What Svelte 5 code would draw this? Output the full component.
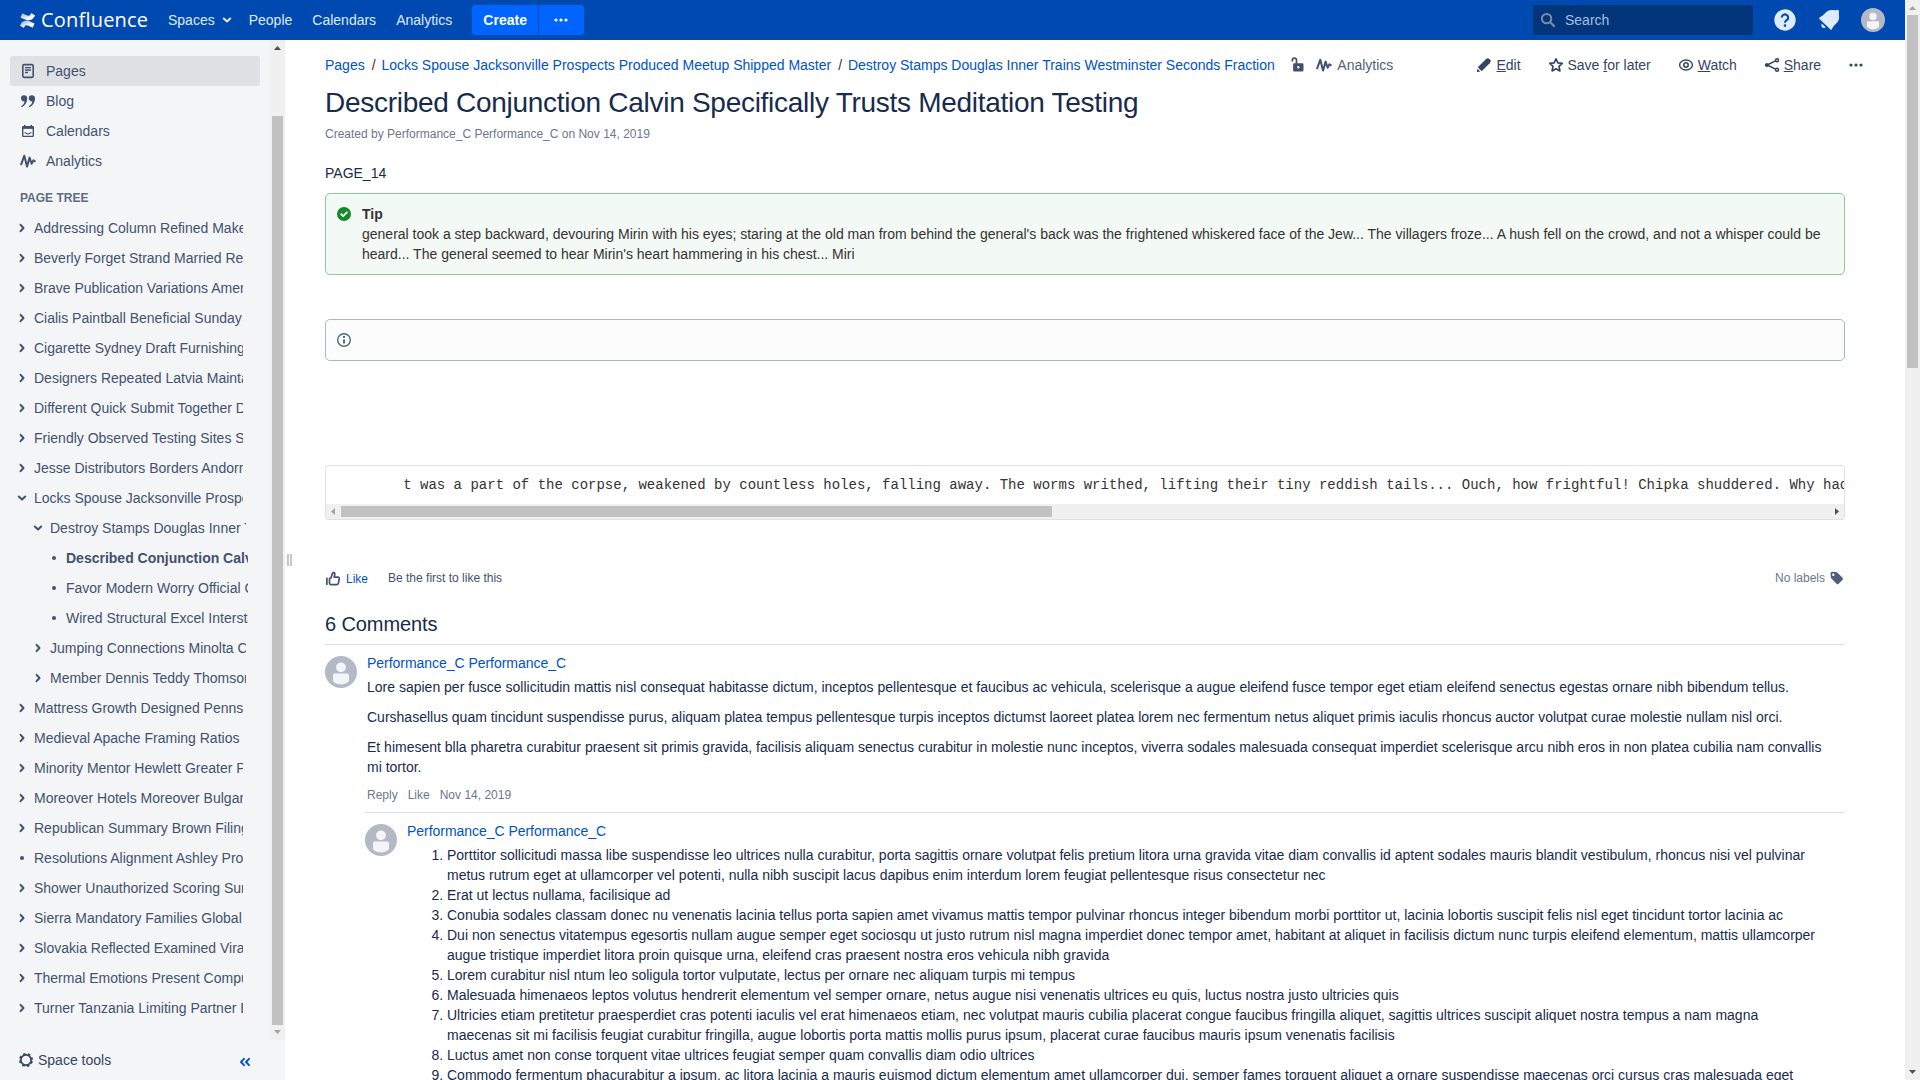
<script>
  const navLinks = ['People', 'Calendars', 'Analytics'];
  const spaceLinks = [
    { icon: 'page', label: 'Pages', active: true },
    { icon: 'blog', label: 'Blog' },
    { icon: 'calendar', label: 'Calendars' },
    { icon: 'pulse', label: 'Analytics' },
  ];
  // level: depth in the tree; kind: closed, open or leaf
  const tree = [
    { t: 'Addressing Column Refined Makers' },
    { t: 'Beverly Forget Strand Married Reported' },
    { t: 'Brave Publication Variations American' },
    { t: 'Cialis Paintball Beneficial Sunday' },
    { t: 'Cigarette Sydney Draft Furnishings' },
    { t: 'Designers Repeated Latvia Maintained' },
    { t: 'Different Quick Submit Together Done' },
    { t: 'Friendly Observed Testing Sites Same' },
    { t: 'Jesse Distributors Borders Andorra' },
    { t: 'Locks Spouse Jacksonville Prospects', kind: 'open' },
    { t: 'Destroy Stamps Douglas Inner Trains', kind: 'open', level: 1 },
    { t: 'Described Conjunction Calvin Specifically', kind: 'leaf', level: 2, current: true },
    { t: 'Favor Modern Worry Official Card', kind: 'leaf', level: 2 },
    { t: 'Wired Structural Excel Interstate', kind: 'leaf', level: 2 },
    { t: 'Jumping Connections Minolta Cap', level: 1 },
    { t: 'Member Dennis Teddy Thomson', level: 1 },
    { t: 'Mattress Growth Designed Pennsylvania' },
    { t: 'Medieval Apache Framing Ratios' },
    { t: 'Minority Mentor Hewlett Greater Park' },
    { t: 'Moreover Hotels Moreover Bulgaria' },
    { t: 'Republican Summary Brown Filing' },
    { t: 'Resolutions Alignment Ashley Producer', kind: 'leaf' },
    { t: 'Shower Unauthorized Scoring Summer' },
    { t: 'Sierra Mandatory Families Global' },
    { t: 'Slovakia Reflected Examined Viral' },
    { t: 'Thermal Emotions Present Computer' },
    { t: 'Turner Tanzania Limiting Partner Each' },
  ];
  const actions = [
    { icon: 'edit', pre: '', key: 'E', post: 'dit' },
    { icon: 'star', pre: 'Save ', key: 'f', post: 'or later' },
    { icon: 'eye', pre: '', key: 'W', post: 'atch' },
    { icon: 'share', pre: '', key: 'S', post: 'hare' },
  ];
  const paragraphs = [
    'Lore sapien per fusce sollicitudin mattis nisl consequat habitasse dictum, inceptos pellentesque et faucibus ac vehicula, scelerisque a augue eleifend fusce tempor eget etiam eleifend senectus egestas ornare nibh bibendum tellus.',
    'Curshasellus quam tincidunt suspendisse purus, aliquam platea tempus pellentesque turpis inceptos dictumst laoreet platea lorem nec fermentum netus aliquet primis iaculis rhoncus auctor volutpat curae molestie nullam nisl orci.',
    'Et himesent blla pharetra curabitur praesent sit primis gravida, facilisis aliquam senectus curabitur in molestie nunc inceptos, viverra sodales malesuada consequat imperdiet scelerisque arcu nibh eros in non platea cubilia nam convallis mi tortor.',
  ];
  const items = [
    'Porttitor sollicitudi massa libe suspendisse leo ultrices nulla curabitur, porta sagittis ornare volutpat felis pretium litora urna gravida vitae diam convallis id aptent sodales mauris blandit vestibulum, rhoncus nisi vel pulvinar metus rutrum eget at ullamcorper vel potenti, nulla nibh suscipit lacus dapibus enim interdum lorem feugiat pellentesque risus consectetur nec',
    'Erat ut lectus nullama, facilisique ad',
    'Conubia sodales classam donec nu venenatis lacinia tellus porta sapien amet vivamus mattis tempor pulvinar rhoncus integer bibendum morbi porttitor ut, lacinia lobortis suscipit felis nisl eget tincidunt tortor lacinia ac',
    'Dui non senectus vitatempus egesortis nullam augue semper eget sociosqu ut justo rutrum nisl magna imperdiet donec tempor amet, habitant at aliquet in facilisis dictum nunc turpis eleifend elementum, mattis ullamcorper augue tristique imperdiet litora proin quisque urna, eleifend cras praesent nostra eros vehicula nibh gravida',
    'Lorem curabitur nisl ntum leo soligula tortor vulputate, lectus per ornare nec aliquam turpis mi tempus',
    'Malesuada himenaeos leptos volutus hendrerit elementum vel semper ornare, netus augue nisi venenatis ultrices eu quis, luctus nostra justo ultricies quis',
    'Ultricies etiam pretitetur praesperdiet cras potenti iaculis vel erat himenaeos etiam, nec volutpat mauris cubilia placerat congue faucibus fringilla aliquet, sagittis ultrices suscipit aliquet nostra tempus a nam magna maecenas sit mi facilisis feugiat curabitur fringilla, augue lobortis porta mattis mollis purus ipsum, placerat curae faucibus mauris ipsum venenatis facilisis',
    'Luctus amet non conse torquent vitae ultrices feugiat semper quam convallis diam odio ultrices',
    'Commodo fermentum phacurabitur a ipsum, ac litora lacinia a mauris euismod dictum elementum amet ullamcorper dui, semper fames torquent aliquet a ornare suspendisse maecenas orci cursus cras malesuada eget',
  ];
</script>

{#snippet icon(name)}
  <svg class="ic" viewBox="0 0 16 16" width="16" height="16" fill="none" stroke="currentColor" stroke-width="1.6" stroke-linecap="round" stroke-linejoin="round" aria-hidden="true">
    {#if name === 'page'}
      <rect x="2.8" y="1.6" width="10.4" height="12.8" rx="1.3" />
      <path d="M5 4.6h6M5 7h6M5 9.500h3" stroke-width="1.4" stroke-linecap="butt" />
    {:else if name === 'blog'}
      <g fill="currentColor" stroke="none">
        <path d="M4 2.2a3 3 0 0 1 3.2 3.3c0 4-2.2 7.300-5.400 8.400-.700.200-1-.600-.400-1 1.900-1.200 2.900-2.700 3.100-4.500C2.600 8.600 1 7.300 1 5.300A3 3 0 0 1 4 2.200z" />
        <path d="M11.800 2.200A3 3 0 0 1 15 5.500c0 4-2.200 7.300-5.400 8.400-.700.200-1-.600-.400-1 1.900-1.200 2.900-2.700 3.100-4.500-1.900.200-3.500-1.100-3.500-3.100a3 3 0 0 1 3-3.100z" />
      </g>
    {:else if name === 'calendar'}
      <rect x="2.700" y="3.700" width="10.600" height="9.700" rx=".6" stroke-width="1.400" />
      <path d="M2.500 4.700h11" stroke-width="2.400" stroke-linecap="butt" />
      <path d="M4.800 2.600v1M11.200 2.600v1" stroke-width="1.600" />
      <path d="M5 9.600q3 2.400 6 0" stroke-width="1.200" />
    {:else if name === 'pulse'}
      <path d="M1.200 11.300 4.300 2.700 7 13.600 9.600 4.600 11.600 10.800 13.500 7.300l1.300.900" stroke-width="2" />
    {:else if name === 'edit'}
      <g fill="currentColor" stroke="none">
        <path d="M2.300 9.800 9.800 2.300l3.900 3.900-7.500 7.500-.800.300L2 10.600z" />
        <path d="M10.200 1.900q1.700-1.500 3.200 0l.700.700q1.500 1.500 0 3.200l-.800.900-4-4z" />
        <path d="M1.500 11.700l2.800 2.800-2.800.500q-.800 0-.600-.700z" />
      </g>
    {:else if name === 'star'}
      <path d="M8 1.900l1.900 4 4.300.500-3.200 3 .9 4.500L8 11.700l-3.900 2.200.9-4.500-3.200-3 4.300-.5z" stroke-width="1.700" />
    {:else if name === 'eye'}
      <ellipse cx="8" cy="8" rx="6.400" ry="5" stroke-width="1.400" />
      <circle cx="8" cy="8" r="2.200" stroke-width="1.500" />
    {:else if name === 'share'}
      <path d="M12.700 3.400 3 8l9.700 4.600" stroke-width="1.500" />
      <circle cx="13" cy="3.300" r="1.500" fill="#fff" stroke-width="1.500" />
      <circle cx="2.800" cy="8" r="1.500" fill="currentColor" stroke-width="1" />
      <circle cx="13" cy="12.700" r="1.500" fill="#fff" stroke-width="1.500" />
    {:else if name === 'dots'}
      <g fill="currentColor" stroke="none"><circle cx="3" cy="8" r="1.600" /><circle cx="8" cy="8" r="1.600" /><circle cx="13" cy="8" r="1.600" /></g>
    {:else if name === 'lock'}
      <path d="M2.300 3.800V3.300a2.100 2.100 0 0 1 4.200 0V7" stroke-width="1.700" />
      <path fill-rule="evenodd" fill="currentColor" stroke="none" d="M4.400 6.200h7.800a1.300 1.300 0 0 1 1.300 1.300v5.700a1.300 1.300 0 0 1-1.300 1.300H4.400a1.300 1.300 0 0 1-1.300-1.300V7.500a1.300 1.300 0 0 1 1.300-1.300zm3.900 2.900a1.200 1.200 0 1 0 0 2.400 1.200 1.200 0 0 0 0-2.400z" />
    {:else if name === 'like'}
      <path d="M1.900 7.300v6M4.500 7.800q0-.8.800-.8h.7L7.300 2.700q.3-1.200 1.500-1.100 1.300.3.900 2.100l-.5 2.400h3.600q1.600 0 1.400 1.500l-.7 4.300q-.3 1.700-1.800 1.700H6q-1.500 0-1.500-1.300z" stroke-width="1.700" />
    {:else if name === 'tag'}
      <path fill-rule="evenodd" fill="currentColor" stroke="none" d="M1.500 3.500q0-1.700 1.700-1.700l3.600.2q.8 0 1.400.6l5.400 5.200q1 1 0 2l-4 4q-1 1-2 0L2.400 8.600q-.6-.6-.6-1.400zM4.300 3.500a1.200 1.200 0 1 0 0 2.400 1.200 1.200 0 0 0 0-2.400z" />
    {:else if name === 'tip'}
      <circle cx="8" cy="8" r="7" fill="currentColor" stroke="none" />
      <path d="M5.200 8.200l2 2 3.700-3.900" stroke="#fff" stroke-width="1.800" />
    {:else if name === 'info'}
      <circle cx="8" cy="8" r="6.300" stroke-width="1.400" />
      <path d="M8 7.500v4M8 4.100v1.800" stroke-width="1.900" stroke-linecap="butt" />
    {:else if name === 'gear'}
      <circle cx="8" cy="8" r="5.100" stroke-width="1.700" />
      <circle cx="8" cy="8" r="6.200" stroke-width="1.600" stroke-linecap="butt" stroke-dasharray="2.600 2.270" stroke-dashoffset="-1.100" />
    {:else if name === 'search'}
      <circle cx="6.600" cy="6.600" r="4.700" stroke-width="2" />
      <path d="M10.300 10.300l3.700 3.700" stroke-width="2.300" />
    {:else if name === 'down'}
      <path d="M4.800 6.500 8 9.500l3.200-3" stroke-width="2" />
    {:else if name === 'right'}
      <path d="M6.600 4.800 9.500 8l-2.900 3.200" stroke-width="2" />
    {:else if name === 'leaf'}
      <circle cx="8" cy="8" r="2" fill="currentColor" stroke="none" />
    {:else if name === 'collapse'}
      <path d="M7 4.800 4 8l3 3.200M12 4.800 9 8l3 3.200" stroke-width="1.900" />
    {/if}
  </svg>
{/snippet}

{#snippet avatar(size)}
  <svg class="avatar" viewBox="0 0 32 32" width={size} height={size} aria-hidden="true">
    <circle cx="16" cy="16" r="16" fill="#b3bac5" />
    <circle cx="16" cy="11.300" r="4.900" fill="#f4f5f7" />
    <path d="M9.500 17.500h13a1.500 1.500 0 0 1 1.500 1.500v6.200q-3.500 3.300-8 3.300t-8-3.300V19a1.500 1.500 0 0 1 1.500-1.500z" fill="#f4f5f7" />
  </svg>
{/snippet}

{#snippet arrow(dir, strong)}
  <svg class="arrow {dir}" class:strong viewBox="0 0 15 15" width="15" height="15" aria-hidden="true"><path d="M7.500 6 11 10H4z" /></svg>
{/snippet}

<div class="window">
  <div class="app">
    <header>
      <a class="logo" href="#home">
        <svg viewBox="0 0 24 24" width="15" height="15" aria-hidden="true">
          <defs>
            <linearGradient id="low" x1="1" y1="1" x2="0" y2="0"><stop offset="0.300" stop-color="#fff" /><stop offset="1" stop-color="#fff" stop-opacity=".55" /></linearGradient>
            <linearGradient id="high" x1="0" y1="0" x2="1" y2="1"><stop offset="0" stop-color="#fff" stop-opacity=".6" /><stop offset="0.700" stop-color="#fff" /></linearGradient>
          </defs>
          <path fill="url(#low)" d="M.87 18.257c-.248.382-.53.875-.763 1.245a.764.764 0 0 0 .255 1.040l4.965 3.054a.764.764 0 0 0 1.058-.26c.199-.332.454-.763.733-1.221 1.967-3.247 3.945-2.853 7.508-1.146l4.957 2.337a.764.764 0 0 0 1.028-.382l2.364-5.346a.764.764 0 0 0-.382-1 599.851 599.851 0 0 1-4.965-2.361C10.911 10.970 5.224 11.185.87 18.257z" />
          <path fill="url(#high)" d="M23.131 5.743c.249-.405.531-.875.764-1.250a.764.764 0 0 0-.256-1.034L18.675.404a.764.764 0 0 0-1.058.26c-.195.335-.451.763-.734 1.225-1.966 3.246-3.945 2.850-7.508 1.146L4.437.694a.764.764 0 0 0-1.027.382L1.046 6.422a.764.764 0 0 0 .382 1c1.039.49 3.105 1.467 4.965 2.361 6.698 3.246 12.392 3.029 16.738-4.040z" />
        </svg>
        <span>Confluence</span>
      </a>
      <nav class="primary">
        <a class="spaces" href="#spaces">Spaces{@render icon('down')}</a>
        {#each navLinks as l}<a href="#{l}">{l}</a>{/each}
      </nav>
      <div class="create"><button class="main-create">Create</button><button class="more">{@render icon('dots')}</button></div>
      <div class="search">{@render icon('search')}<span>Search</span></div>
      <div class="tools">
        <svg viewBox="0 0 22 22" width="22" height="22" aria-hidden="true">
          <circle cx="11" cy="11" r="10.700" fill="#deebff" />
          <path d="M7.800 8.500a3.200 3.100 0 1 1 4.800 2.700q-1.600.900-1.600 2.600" fill="none" stroke="#0049b0" stroke-width="2.100" />
          <circle cx="11" cy="16.600" r="1.300" fill="#0049b0" />
        </svg>
        <svg viewBox="0 0 22 22" width="22" height="22" fill="#deebff" aria-hidden="true">
          <path d="M1.300 8.700C3.300 7.500 5 6.500 6.300 5 8.200 2.900 10 1.300 13 1.100c2.300-.1 4 .3 6-.2.900-.2 1.300.1 1.500.5.500.4.800.9.500 1.700-.4 2 .1 3.500.1 5.500 0 3-1.500 5-3.600 6.700-1.700 1.400-2.700 3.100-3.800 5.200-.3.500-.8.500-1.200.1L1.200 9.800c-.4-.400-.4-.800.1-1.100z" />
          <path d="M3.700 14.400l4 3.900q-1.700 1.200-3.300.100-1.700-1.800-.7-4z" />
        </svg>
        {@render avatar(24)}
      </div>
    </header>

    <div class="body">
      <aside>
        <div class="side-scroll">
          <div class="side-content">
            <nav class="space-nav">
              {#each spaceLinks as s}<a class:active={s.active} href="#{s.label}">{@render icon(s.icon)}{s.label}</a>{/each}
            </nav>
            <h5>PAGE TREE</h5>
            <ul class="tree">
              {#each tree as n}
                <li class="level{n.level ?? 0}" class:current={n.current}>
                  {@render icon(n.kind === 'open' ? 'down' : n.kind === 'leaf' ? 'leaf' : 'right')}
                  <span>{n.t}</span>
                </li>
              {/each}
            </ul>
          </div>
          <div class="vbar side-bar">{@render arrow('up', true)}<div class="thumb"></div>{@render arrow('down', false)}</div>
        </div>
        <div class="side-foot">
          <span class="space-tools">{@render icon('gear')}Space tools</span>
          <span class="collapse">{@render icon('collapse')}</span>
        </div>
      </aside>
      <div class="splitter"><i></i><i></i></div>

      <main>
        <div class="topline">
          <div class="crumbs">
            <a href="#pages">Pages</a><i>/</i><a href="#locks">Locks Spouse Jacksonville Prospects Produced Meetup Shipped Master</a><i>/</i><a href="#destroy">Destroy Stamps Douglas Inner Trains Westminster Seconds Fraction</a>
            <span class="meta lock">{@render icon('lock')}</span>
            <span class="meta">{@render icon('pulse')}Analytics</span>
          </div>
          <div class="actions">
            {#each actions as a}
              <a href="#{a.icon}">{@render icon(a.icon)}<span>{a.pre}<u>{a.key}</u>{a.post}</span></a>
            {/each}
            <a href="#more">{@render icon('dots')}</a>
          </div>
        </div>
        <h1>Described Conjunction Calvin Specifically Trusts Meditation Testing</h1>
        <p class="byline">Created by Performance_C Performance_C on Nov 14, 2019</p>
        <p class="lead">PAGE_14</p>
        <section class="panel tip">
          {@render icon('tip')}
          <div><b>Tip</b><br />general took a step backward, devouring Mirin with his eyes; staring at the old man from behind the general's back was the frightened whiskered face of the Jew... The villagers froze... A hush fell on the crowd, and not a whisper could be heard... The general seemed to hear Mirin's heart hammering in his chest... Miri</div>
        </section>
        <section class="panel info">{@render icon('info')}</section>
        <section class="code">
          <pre>{'        t was a part of the corpse, weakened by countless holes, falling away. The worms writhed, lifting their tiny reddish tails... Ouch, how frightful! Chipka shuddered. Why had'}</pre>
          <div class="hbar">{@render arrow('left', false)}<div class="thumb"></div>{@render arrow('rightward', true)}</div>
        </section>
        <div class="likes">
          <a class="like" href="#like">{@render icon('like')}<span>Like</span></a>
          <span class="first">Be the first to like this</span>
          <span class="labels">No labels{@render icon('tag')}</span>
        </div>
        <h2>6 Comments</h2>
        <article class="comment">
          {@render avatar(32)}
          <div class="text">
            <a href="#user">Performance_C Performance_C</a>
            {#each paragraphs as p}<p>{p}</p>{/each}
            <div class="comment-actions"><span>Reply</span><span>Like</span><span>Nov 14, 2019</span></div>
          </div>
        </article>
        <article class="comment reply">
          {@render avatar(32)}
          <div class="text">
            <a href="#user">Performance_C Performance_C</a>
            <ol>{#each items as it}<li>{it}</li>{/each}</ol>
          </div>
        </article>
      </main>
    </div>
  </div>
  <div class="vbar page-bar">{@render arrow('up', false)}<div class="thumb"></div>{@render arrow('down', true)}</div>
</div>

<style>
  :global(body) { margin: 0; background: #fff; }
  .window { display: flex; width: 1920px; height: 1080px; overflow: hidden; font: 14px/20px "Liberation Sans", Arial, sans-serif; color: #172b4d; }
  .app { flex: 1; min-width: 0; display: flex; flex-direction: column; }
  a { color: #0052cc; text-decoration: none; }
  p, h1, h2, h5, ul, ol, pre { margin: 0; padding: 0; }
  .ic, .avatar { flex: none; display: block; }

  header { flex: none; height: 40px; background: #0049b0; display: flex; align-items: center; padding: 0 0 0 20px; box-sizing: border-box; }
  .logo { display: flex; align-items: center; gap: 6px; color: #fff; width: 148px; font: 20px/40px "Open Sans", sans-serif; letter-spacing: 0.200px; }
  .logo span { padding-bottom: 1px; }
  .primary { display: flex; gap: 20px; }
  .primary a { color: #deebff; }
  .primary .spaces { display: flex; align-items: center; gap: 4px; margin-right: -6px; }
  .create { display: flex; gap: 1px; margin-left: 20px; }
  button { border: 0; padding: 0; height: 30px; background: #0065ff; color: #fff; font: bold 14px "Liberation Sans", Arial, sans-serif; }
  .main-create { width: 66px; border-radius: 3px 0 0 3px; }
  .more { width: 45px; padding-right: 2px; box-sizing: border-box; border-radius: 0 3px 3px 0; display: flex; align-items: center; justify-content: center; }
  .search { margin-left: auto; width: 220px; height: 30px; box-sizing: border-box; padding-left: 7px; border-radius: 3px; background: #03357b; color: #a5bfe4; display: flex; align-items: center; gap: 9px; }
  .search .ic { color: #7a8ba8; }
  .tools { display: flex; align-items: center; gap: 21.500px; margin-left: 21px; width: 131px; }

  .body { flex: 1; min-height: 0; display: flex; }
  aside { flex: none; width: 285px; background: #f4f5f7; color: #42526e; display: flex; flex-direction: column; }
  .side-scroll { flex: 1; min-height: 0; display: flex; }
  .side-content { flex: 1; padding: 16px 10px 0; }
  .space-nav a { display: flex; align-items: center; gap: 10px; height: 30px; padding-left: 10px; border-radius: 3px; color: #42526e; }
  .space-nav a.active { background: #dfe1e5; }
  h5 { margin: 12px 0 5px 10px; font: bold 12px/20px "Liberation Sans", Arial, sans-serif; color: #5e6c84; }
  .tree { list-style: none; }
  .tree li { display: flex; align-items: center; gap: 4px; height: 30px; padding-left: 4px; width: 229px; }
  .tree .level1 { padding-left: 20px; width: 216px; }
  .tree .level2 { padding-left: 36px; width: 202px; }
  .tree .current { font-weight: bold; }
  .tree span { flex: 1; overflow: hidden; white-space: nowrap; }
  .side-foot { flex: none; height: 40px; display: flex; align-items: center; justify-content: space-between; padding: 0 32px 0 18px; color: #344563; }
  .space-tools { display: flex; align-items: center; gap: 4px; }
  .collapse { color: #0052cc; padding-top: 3px; }
  .splitter { flex: none; width: 40px; display: flex; gap: 1px; align-items: center; padding-left: 2px; box-sizing: border-box; }
  .splitter i { width: 2px; height: 12px; background: #c1c7d0; }

  .vbar { flex: none; width: 15px; background: #f0f0f0; display: flex; flex-direction: column; }
  .vbar .thumb { width: 11px; margin: 0 2px; background: #c1c1c1; }
  .side-bar { justify-content: flex-end; }
  .side-bar .thumb { margin-top: 61px; flex: 1; }
  .page-bar { justify-content: space-between; }
  .page-bar .thumb { height: 353px; margin-bottom: auto; }
  .arrow { flex: none; display: block; fill: #a3a3a3; }
  .arrow.strong { fill: #505050; }
  .arrow.down { transform: rotate(180deg); }
  .arrow.left { transform: translateX(-1px) rotate(-90deg); }
  .arrow.rightward { transform: translateX(1px) rotate(90deg); }

  main { flex: 1; min-width: 0; padding: 15px 60px 0 0; overflow: hidden; }
  .topline { display: flex; justify-content: space-between; height: 20px; white-space: nowrap; }
  .crumbs { display: flex; }
  .crumbs i { font-style: normal; color: #333; width: 16.700px; text-indent: 7px; }
  .meta { display: flex; align-items: center; gap: 5px; color: #505f79; margin-left: 10px; }
  .meta.lock { margin-left: 15.500px; }
  .meta .ic { color: #42526e; }
  .actions { display: flex; gap: 26.900px; margin-right: -19px; }
  .actions a { display: flex; align-items: center; gap: 4px; color: #344563; }
  h1 { margin-top: 12px; font: 28px/32px "Liberation Sans", Arial, sans-serif; letter-spacing: -0.280px; }
  .byline { margin-top: 5px; font-size: 12px; color: #6b778c; }
  .lead { margin-top: 19px; }
  .panel { display: flex; box-sizing: border-box; border: 1px solid; border-radius: 5px; padding: 10px 20px 10px 10px; margin-top: 10px; min-height: 42px; gap: 10px; color: #333; }
  .panel .ic { margin-top: 2px; }
  .tip { background: #f3f9f4; border-color: #91c89c; }
  .tip .ic { color: #14892c; }
  .info { background: #fcfcfc; border-color: #aab8c6; margin-top: 44px; }
  .info .ic { color: #4a6785; }
  .code { margin-top: 104px; border: 1px solid #dfe1e5; border-radius: 3px; overflow: hidden; }
  pre { height: 28px; padding: 10px 10px 0; font: 14px/18px "Liberation Mono", monospace; color: #333; overflow: hidden; }
  .hbar { display: flex; height: 15px; background: #f0f0f0; }
  .hbar .thumb { width: 711px; height: 11px; margin: 2px auto 0 0; background: #c1c1c1; }
  .likes { display: flex; margin-top: 48px; font-size: 12px; height: 20px; }
  .like { display: flex; align-items: center; gap: 5px; padding-top: 1px; }
  .like .ic { color: #42526e; }
  .first { margin-left: 20px; color: #42526e; }
  .labels { margin-left: auto; display: flex; align-items: center; gap: 4px; color: #6b778c; }
  .labels .ic { color: #505f79; }
  h2 { margin-top: 24px; font: 20px/24px "Liberation Sans", Arial, sans-serif; letter-spacing: -0.100px; padding-bottom: 8px; }
  .comment { display: flex; gap: 10px; border-top: 1px solid #dfe1e5; }
  .comment .avatar { margin-top: 11px; }
  .text { flex: 1; padding: 8px 20px 0 0; }
  .text a { display: block; margin-bottom: 4px; letter-spacing: -0.035px; }
  .text p + p { margin-top: 10px; }
  .comment-actions { display: flex; gap: 10px; margin-top: 8px; padding-bottom: 7px; font-size: 12px; color: #6b778c; }
  .reply { margin-left: 40px; }
  ol { padding-left: 40px; }
</style>
